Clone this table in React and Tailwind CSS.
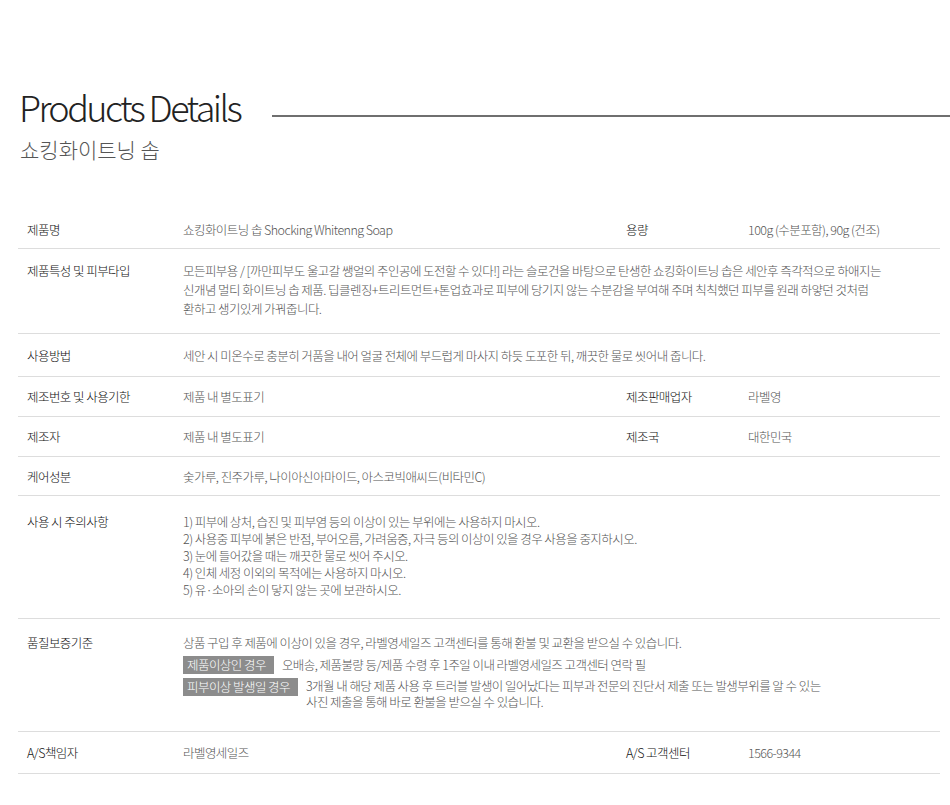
const font = { fontFamily: '"Noto Sans CJK KR", "Noto Sans", sans-serif' };

const Row = ({ className = "", label, children }) => (
  <div className={`flex border-b border-[#dddddd] ${className}`}>
    <div className="w-[165px] shrink-0 pl-[9px] text-[#111]">{label}</div>
    <div className="flex-1 min-w-0">{children}</div>
  </div>
);

const Split = ({ value, label2, value2 }) => (
  <div className="flex">
    <div className="w-[443px] shrink-0 text-[#555]">{value}</div>
    <div className="w-[122px] shrink-0 text-[#111]">{label2}</div>
    <div className="text-[#555]">{value2}</div>
  </div>
);

const Badge = ({ children, className = "" }) => (
  <span className={`inline-block h-[18px] leading-[18px] bg-[#8c8c8c] text-white pl-[4px] shrink-0 ${className}`}>
    {children}
  </span>
);

export default function App() {
  return (
    <div className="w-[950px] min-h-[805px] bg-white" style={font}>
      <div className="pt-[88px]">
        <div className="flex items-start">
          <h1 className="ml-[19px] text-[36px] leading-[36px] font-light tracking-[-2.6px] text-[#222] whitespace-nowrap">
            Products Details
          </h1>
          <div className="flex-1 h-[2px] bg-[#6f6f6f] mt-[27px] ml-[32px]" />
        </div>
        <h2 className="ml-[20px] mt-[13px] text-[21px] leading-[24px] font-light text-[#555]">
          쇼킹화이트닝 솝
        </h2>
      </div>

      <div className="ml-[18px] w-[922px] mt-[49px] text-[12.5px] leading-[19px] font-light tracking-[-0.55px] whitespace-nowrap">
        <Row label="제품명" className="h-[39px] items-center">
          <Split value="쇼킹화이트닝 솝 Shocking Whitenng Soap" label2="용량" value2="100g (수분포함), 90g (건조)" />
        </Row>

        <Row label="제품특성 및 피부타입" className="h-[85px] items-start pt-[12px]">
          <p className="text-[#555]">
            모든피부용 / [까만피부도 울고갈 쌩얼의 주인공에 도전할 수 있다!] 라는 슬로건을 바탕으로 탄생한 쇼킹화이트닝 솝은 세안후 즉각적으로 하애지는
            <br />
            신개념 멀티 화이트닝 솝 제품. 딥클렌징+트리트먼트+톤업효과로 피부에 당기지 않는 수분감을 부여해 주며 칙칙했던 피부를 원래 하얗던 것처럼
            <br />
            환하고 생기있게 가꿔줍니다.
          </p>
        </Row>

        <Row label="사용방법" className="h-[43px] items-center">
          <p className="text-[#555]">
            세안 시 미온수로 충분히 거품을 내어 얼굴 전체에 부드럽게 마사지 하듯 도포한 뒤, 깨끗한 물로 씻어내 줍니다.
          </p>
        </Row>

        <Row label="제조번호 및 사용기한" className="h-[40px] items-center">
          <Split value="제품 내 별도표기" label2="제조판매업자" value2="라벨영" />
        </Row>

        <Row label="제조자" className="h-[40px] items-center">
          <Split value="제품 내 별도표기" label2="제조국" value2="대한민국" />
        </Row>

        <Row label="케어성분" className="h-[39px] items-center">
          <p className="text-[#555]">숯가루, 진주가루, 나이아신아마이드, 아스코빅애씨드(비타민C)</p>
        </Row>

        <Row label="사용 시 주의사항" className="h-[123px] items-start pt-[17px] leading-[17px]">
          <ul className="text-[#555]">
            <li>1) 피부에 상처, 습진 및 피부염 등의 이상이 있는 부위에는 사용하지 마시오.</li>
            <li>2) 사용중 피부에 붉은 반점, 부어오름, 가려움증, 자극 등의 이상이 있을 경우 사용을 중지하시오.</li>
            <li>3) 눈에 들어갔을 때는 깨끗한 물로 씻어 주시오.</li>
            <li>4) 인체 세정 이외의 목적에는 사용하지 마시오.</li>
            <li>5) 유·소아의 손이 닿지 않는 곳에 보관하시오.</li>
          </ul>
        </Row>

        <Row label="품질보증기준" className="h-[113px] items-start pt-[14px]">
          <div className="text-[#555]">
            <p>상품 구입 후 제품에 이상이 있을 경우, 라벨영세일즈 고객센터를 통해 환불 및 교환을 받으실 수 있습니다.</p>
            <div className="flex items-start mt-[4px]">
              <Badge className="pr-[8px]">제품이상인 경우</Badge>
              <span className="ml-[8px] leading-[18px]">오배송, 제품불량 등/제품 수령 후 1주일 이내 라벨영세일즈 고객센터 연락 필</span>
            </div>
            <div className="flex items-start mt-[4px]">
              <Badge className="pr-[8px]">피부이상 발생일 경우</Badge>
              <p className="ml-[8px] leading-[16px]">
                3개월 내 해당 제품 사용 후 트러블 발생이 일어났다는 피부과 전문의 진단서 제출 또는 발생부위를 알 수 있는
                <br />
                사진 제출을 통해 바로 환불을 받으실 수 있습니다.
              </p>
            </div>
          </div>
        </Row>

        <Row label="A/S책임자" className="h-[42px] items-center">
          <Split value="라벨영세일즈" label2="A/S 고객센터" value2="1566-9344" />
        </Row>
      </div>
    </div>
  );
}
